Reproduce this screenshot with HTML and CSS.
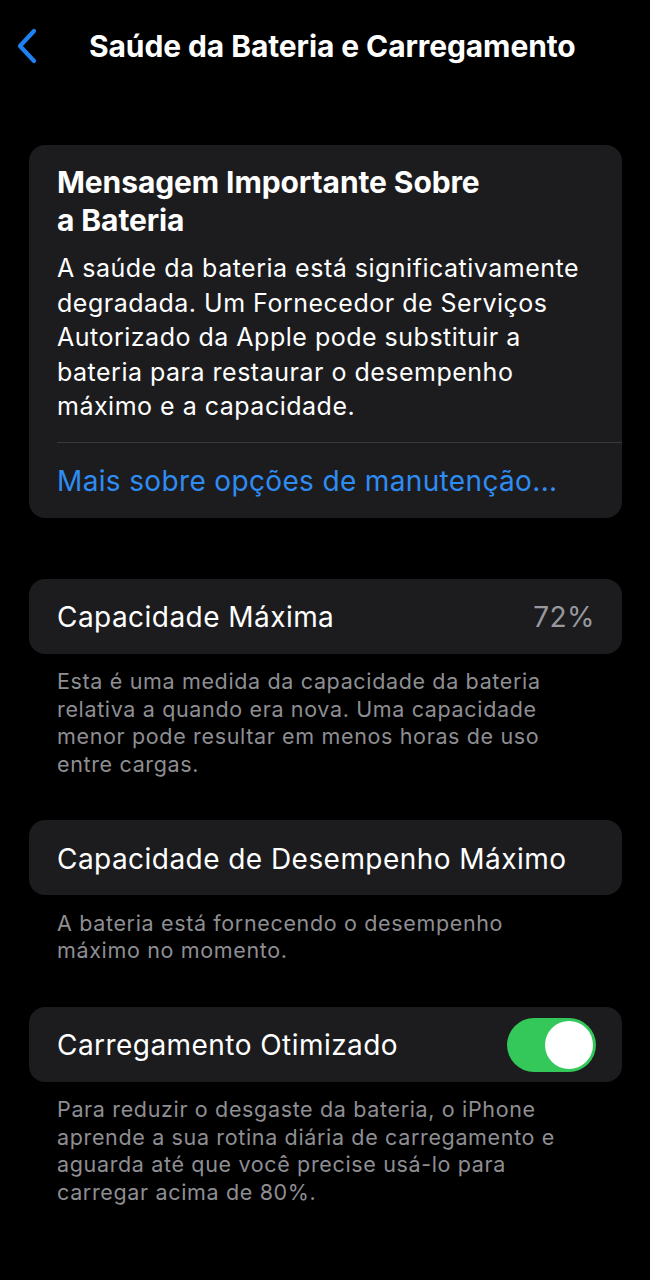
FILE: index.html
```html
<!DOCTYPE html>
<html lang="pt-BR">
<head>
<meta charset="utf-8">
<title>Saúde da Bateria e Carregamento</title>
<link rel="stylesheet" href="styles.css">
</head>
<body>
<header class="nav">
  <svg class="back" width="22" height="36" viewBox="0 0 22 36" aria-hidden="true">
    <path d="M18 3 L4 18 L18 33" fill="none" stroke="#1f82f2" stroke-width="4.2" stroke-linecap="round" stroke-linejoin="round"/>
  </svg>
  <h1 class="nav-title">Saúde da Bateria e Carregamento</h1>
</header>
<main class="content">
  <section class="card notice">
    <h2 class="notice-title">Mensagem Importante Sobre<br>a Bateria</h2>
    <p class="notice-body">A saúde da bateria está significativamente<br>degradada. Um Fornecedor de Serviços<br>Autorizado da Apple pode substituir a<br>bateria para restaurar o desempenho<br>máximo e a capacidade.</p>
    <div class="sep"></div>
    <a class="link" href="#">Mais sobre opções de manutenção...</a>
  </section>

  <section class="group">
    <div class="card row">
      <span class="label">Capacidade Máxima</span>
      <span class="value">72%</span>
    </div>
    <p class="footnote">Esta é uma medida da capacidade da bateria<br>relativa a quando era nova. Uma capacidade<br>menor pode resultar em menos horas de uso<br>entre cargas.</p>
  </section>

  <section class="group">
    <div class="card row">
      <span class="label">Capacidade de Desempenho Máximo</span>
    </div>
    <p class="footnote">A bateria está fornecendo o desempenho<br>máximo no momento.</p>
  </section>

  <section class="group">
    <div class="card row">
      <span class="label">Carregamento Otimizado</span>
      <span class="toggle"><span class="knob"></span></span>
    </div>
    <p class="footnote">Para reduzir o desgaste da bateria, o iPhone<br>aprende a sua rotina diária de carregamento e<br>aguarda até que você precise usá-lo para<br>carregar acima de 80%.</p>
  </section>
</main>
</body>
</html>
```

FILE: styles.css
```css
* { box-sizing: border-box; }
html, body {
  margin: 0;
  padding: 0;
  background: #000;
}
body {
  width: 650px;
  min-height: 1280px;
  font-family: Inter, "Noto Sans", "DejaVu Sans", sans-serif;
  color: #fff;
  -webkit-font-smoothing: antialiased;
}
.nav {
  height: 92px;
  display: flex;
  align-items: center;
  padding-left: 16px;
}
.back {
  display: block;
  flex: none;
}
.nav-title {
  margin: 0 0 0 51px;
  font-size: 30px;
  font-weight: 700;
  letter-spacing: -0.1px;
  line-height: 36px;
}
.content {
  padding: 53px 28px 0 29px;
}
.card {
  background: #1c1c1e;
  border-radius: 16px;
}
.notice {
  padding: 19px 0 0 28px;
  margin-bottom: 61px;
}
.notice-title {
  margin: 0;
  font-size: 30px;
  font-weight: 700;
  line-height: 37.5px;
  letter-spacing: -0.1px;
}
.notice-body {
  margin: 12px 20px 0 0;
  font-size: 25px;
  line-height: 34.5px;
  letter-spacing: 0.5px;
}
.sep {
  height: 1px;
  background: #38383a;
  margin-top: 18px;
}
.link {
  display: block;
  padding: 21px 0 20px;
  font-size: 28px;
  line-height: 34px;
  letter-spacing: 0.35px;
  color: #2f8cf3;
  text-decoration: none;
}
.row {
  height: 75px;
  display: flex;
  align-items: center;
  justify-content: space-between;
  padding: 2px 27px 0 28px;
}
.label {
  font-size: 28px;
  letter-spacing: 0.45px;
}
.value {
  font-size: 28px;
  letter-spacing: 0.45px;
  color: #98989e;
}
.toggle {
  width: 89px;
  height: 54px;
  border-radius: 27px;
  background: #34c759;
  display: flex;
  align-items: center;
  justify-content: flex-end;
  padding-right: 3px;
  margin-right: -1px;
}
.knob {
  width: 48px;
  height: 48px;
  border-radius: 50%;
  background: #fff;
}
.footnote {
  margin: 0;
  padding: 14.5px 0 0 28px;
  font-size: 21.5px;
  line-height: 27.5px;
  letter-spacing: 0.65px;
  color: #8e8e93;
}
.group {
  margin-bottom: 42px;
}
```
